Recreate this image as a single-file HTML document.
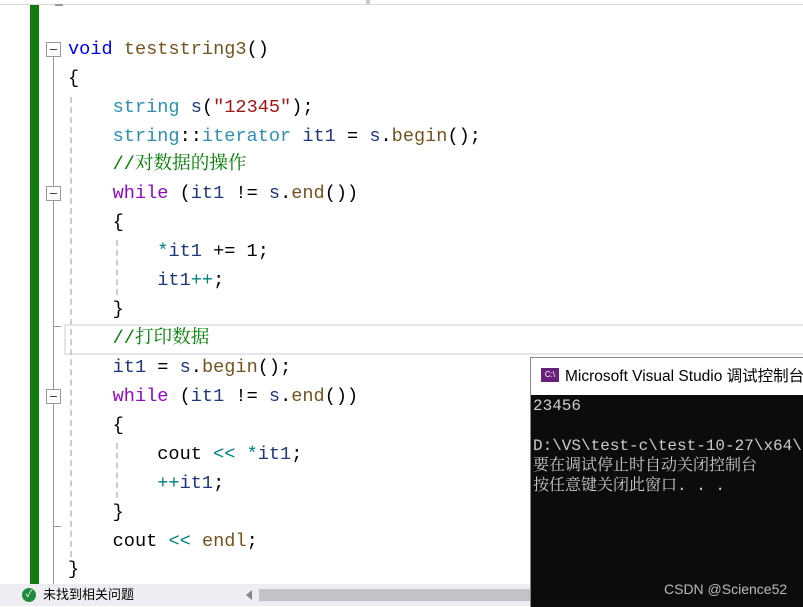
<!DOCTYPE html>
<html><head><meta charset="utf-8"><style>
body{margin:0;width:803px;height:606px;overflow:hidden;background:#fff;position:relative;font-family:"Liberation Mono","Noto Serif CJK SC",monospace}
.top{position:absolute;left:0;top:0;width:803px;height:4px;background:#fff;border-bottom:1px solid #d8d8e0}
.gbar{position:absolute;left:30px;top:5px;width:9px;height:579px;background:#117a11}
.ln{position:absolute;left:68px;font-size:18.6px;line-height:29px;white-space:pre;color:#000}
.k{color:#0000ff}.f{color:#74531f}.t{color:#2b91af}.s{color:#a31515}.c{color:#008000}.w{color:#8f08c4}.v{color:#1f377f}.o{color:#008080}
.fold{position:absolute;left:46px;width:13px;height:13px;border:1px solid #999;background:#fff}
.fold:after{content:"";position:absolute;left:3px;top:6px;width:7px;height:1px;background:#444}
.vl{position:absolute;left:53px;width:1px;background:#999}
.hl{position:absolute;left:64px;top:324px;width:745px;height:27px;border:2px solid #e6e6ea}
.dash{position:absolute;width:0;border-left:2px dashed #ccc}
.status{position:absolute;left:0;top:584px;width:803px;height:22px;background:#eeeef2;font-family:"Liberation Sans","Noto Sans CJK SC",sans-serif;font-size:13px;line-height:22px}
.con{position:absolute;left:530px;top:357px;width:273px;height:249px;background:#0c0c0c;border-left:1px solid #888;border-top:1px solid #888}
.title{height:37px;background:#fff;font-family:"Liberation Sans","Noto Sans CJK SC",sans-serif;font-size:15.5px;line-height:37px;white-space:nowrap;overflow:hidden;color:#000}
.ct{color:#ccc;font-size:16px;line-height:20px;white-space:pre;position:absolute;left:2px}
</style></head><body>
<div class="top"></div>
<div style="position:absolute;left:55px;top:4px;width:8px;height:2px;background:#999"></div>
<div style="position:absolute;left:366px;top:0;width:4px;height:4px;background:#c8c8d8"></div>
<div class="gbar"></div>
<div class="hl"></div>
<div class="fold" style="top:42px"></div>
<div class="vl" style="top:56px;height:130px"></div>
<div class="fold" style="top:186px"></div>
<div class="vl" style="top:200px;height:126px"></div>
<div style="position:absolute;left:53px;top:326px;width:8px;height:1px;background:#999"></div>
<div class="vl" style="top:326px;height:63px"></div>
<div class="fold" style="top:389px"></div>
<div class="vl" style="top:403px;height:181px"></div>
<div style="position:absolute;left:53px;top:526px;width:8px;height:1px;background:#999"></div>
<div class="dash" style="left:70px;top:97px;height:460px"></div>
<div class="dash" style="left:116px;top:240px;height:55px"></div>
<div class="dash" style="left:116px;top:443px;height:55px"></div>
<div class="ln" style="top:35px"><span class="k">void</span> <span class="f">teststring3</span>()</div>
<div class="ln" style="top:64px">{</div>
<div class="ln" style="top:93px">    <span class="t">string</span> <span class="v">s</span>(<span class="s">"12345"</span>);</div>
<div class="ln" style="top:122px">    <span class="t">string</span>::<span class="t">iterator</span> <span class="v">it1</span> = <span class="v">s</span>.<span class="f">begin</span>();</div>
<div class="ln" style="top:150px">    <span class="c">//对数据的操作</span></div>
<div class="ln" style="top:179px">    <span class="w">while</span> (<span class="v">it1</span> != <span class="v">s</span>.<span class="f">end</span>())</div>
<div class="ln" style="top:208px">    {</div>
<div class="ln" style="top:237px">        <span class="o">*</span><span class="v">it1</span> += 1;</div>
<div class="ln" style="top:266px">        <span class="v">it1</span><span class="o">++</span>;</div>
<div class="ln" style="top:295px">    }</div>
<div class="ln" style="top:324px">    <span class="c">//打印数据</span></div>
<div class="ln" style="top:353px">    <span class="v">it1</span> = <span class="v">s</span>.<span class="f">begin</span>();</div>
<div class="ln" style="top:382px">    <span class="w">while</span> (<span class="v">it1</span> != <span class="v">s</span>.<span class="f">end</span>())</div>
<div class="ln" style="top:411px">    {</div>
<div class="ln" style="top:440px">        cout <span class="o">&lt;&lt;</span> <span class="o">*</span><span class="v">it1</span>;</div>
<div class="ln" style="top:469px">        <span class="o">++</span><span class="v">it1</span>;</div>
<div class="ln" style="top:498px">    }</div>
<div class="ln" style="top:527px">    cout <span class="o">&lt;&lt;</span> <span class="f">endl</span>;</div>
<div class="ln" style="top:555px">}</div>
<div class="status">
<div style="position:absolute;left:22px;top:4px;width:14px;height:14px;border-radius:50%;background:#1e8a3c;color:#fff;font-size:10px;line-height:14px;text-align:center">✓</div>
<span style="position:absolute;left:43px;top:0">未找到相关问题</span>
<div style="position:absolute;left:246px;top:6px;width:0;height:0;border-top:5px solid transparent;border-bottom:5px solid transparent;border-right:6px solid #888"></div>
<div style="position:absolute;left:259px;top:5px;width:280px;height:12px;background:#c2c3c9"></div>
</div>
<div class="con">
<div class="title"><span style="display:inline-block;vertical-align:middle;margin:0 6px 3px 10px;width:18px;height:14px;background:#68217a;color:#fff;font-size:8px;line-height:14px;text-align:center">C:\</span>Microsoft Visual Studio 调试控制台</div>
<div class="ct" style="top:38px">23456</div>
<div class="ct" style="top:78px">D:\VS\test-c\test-10-27\x64\</div>
<div class="ct" style="top:98px">要在调试停止时自动关闭控制台</div>
<div class="ct" style="top:118px">按任意键关闭此窗口. . .</div>
<div style="position:absolute;left:133px;top:223px;color:#bbb;font-family:'Liberation Sans',sans-serif;font-size:14px">CSDN @Science52</div>
</div>
</body></html>
